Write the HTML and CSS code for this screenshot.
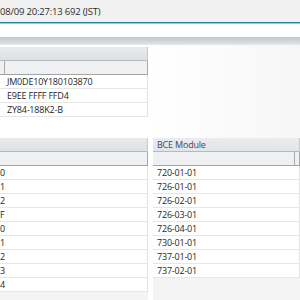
FILE: index.html
```html
<!DOCTYPE html>
<html lang="ja">
<head>
  <meta charset="UTF-8" />
  <title>ECU Info</title>
  <link rel="stylesheet" href="styles.css">
</head>
<body>
  <div class="topbar">
    <span class="clock">08/09 20:27:13 692 (JST)</span>
  </div>
  <div class="spacer"></div>
  <div class="panel-edge"></div>
  <div class="panel">
    <div class="grid grid-id">
      <div class="head1"></div>
      <div class="head2"><span class="cell narrow"></span><span class="cell"></span></div>
      <div class="row"><span class="cell narrow"></span><span class="cell">JM0DE10Y180103870</span></div>
      <div class="row"><span class="cell narrow"></span><span class="cell">E9EE FFFF FFD4</span></div>
      <div class="row"><span class="cell narrow"></span><span class="cell">ZY84-188K2-B</span></div>
    </div>

    <div class="modules">
      <div class="grid grid-left">
        <div class="head1"></div>
        <div class="head2"></div>
        <div class="row"><span class="cell num">0</span></div>
        <div class="row"><span class="cell num">1</span></div>
        <div class="row"><span class="cell num">2</span></div>
        <div class="row"><span class="cell num">F</span></div>
        <div class="row"><span class="cell num">0</span></div>
        <div class="row"><span class="cell num">1</span></div>
        <div class="row"><span class="cell num">2</span></div>
        <div class="row"><span class="cell num">3</span></div>
        <div class="row"><span class="cell num">4</span></div>
      </div>
      <div class="grid grid-right">
        <div class="head1"><span class="cell title">BCE Module</span></div>
        <div class="head2"><span class="cell wide"></span><span class="cell"></span></div>
        <div class="row"><span class="cell">720-01-01</span></div>
        <div class="row"><span class="cell">726-01-01</span></div>
        <div class="row"><span class="cell">726-02-01</span></div>
        <div class="row"><span class="cell">726-03-01</span></div>
        <div class="row"><span class="cell">726-04-01</span></div>
        <div class="row"><span class="cell">730-01-01</span></div>
        <div class="row"><span class="cell">737-01-01</span></div>
        <div class="row"><span class="cell">737-02-01</span></div>
      </div>
    </div>
  </div>
</body>
</html>
```

FILE: styles.css
```css
* {
  box-sizing: border-box;
}
body {
  margin: 0;
  width: 300px;
  height: 300px;
  overflow: hidden;
  font-family: "Open Sans", "Noto Sans", sans-serif;
  color: #262626;
  background: #ffffff;
}
.topbar {
  height: 23px;
  background: #f1f1f1;
  border-bottom: 1px solid #1b8797;
  box-shadow: 0 1px 0 #86d3df;
  display: flex;
  align-items: center;
  overflow: hidden;
}
.clock {
  font-size: 9.5px;
  letter-spacing: -0.2px;
  white-space: nowrap;
  color: #2b2b2b;
}
.spacer {
  height: 14px;
}
.panel-edge {
  height: 8px;
  background: linear-gradient(#c4c8cc, #d3d6d9 55%, #e6e8ea);
}
.panel {
  height: 255px;
  padding-top: 2px;
  background: linear-gradient(90deg, #ffffff 50%, #f6f6f6);
}
.grid {
  font-size: 9px;
  letter-spacing: -0.2px;
}
.grid-id {
  width: 148px;
}
.head1 {
  height: 14px;
  background: linear-gradient(#e9eaec, #dfe0e2);
  border-right: 1px solid #c8c8c8;
  border-bottom: 1px solid #b9b9b9;
  display: flex;
}
.head2 {
  height: 14px;
  background: #eff0f1;
  border-right: 1px solid #a9a9a9;
  border-bottom: 1px solid #a4a4a4;
  display: flex;
}
.row {
  height: 14px;
  background: #ffffff;
  border-right: 1px solid #e2e2e2;
  border-bottom: 1px solid #e6e6e6;
  display: flex;
}
.cell {
  flex: 1;
  padding-left: 2px;
  line-height: 13px;
  white-space: nowrap;
}
.cell.narrow {
  flex: 0 0 5px;
}
.head2 .cell.narrow {
  border-right: 1px solid #a9a9a9;
}
.modules {
  display: flex;
  gap: 5px;
  margin-top: 21px;
}
.grid-left {
  width: 150px;
  height: 162px;
  background: #f4f4f4;
}
.cell.num {
  flex: 0 0 5px;
  padding: 0 1px 0 0;
  text-align: right;
  direction: rtl;
}
.grid-right {
  flex: 1;
  height: 162px;
  background: #f4f4f4;
}
.grid-right .head1 {
  background: linear-gradient(#eaecef, #e1e4e8);
}
.grid-right .cell {
  padding-left: 4px;
}
.cell.title {
  color: #3d4a5a;
  line-height: 14px;
}
.head2 .cell.wide {
  flex: 0 0 142px;
  border-right: 1px solid #a9a9a9;
}
```
